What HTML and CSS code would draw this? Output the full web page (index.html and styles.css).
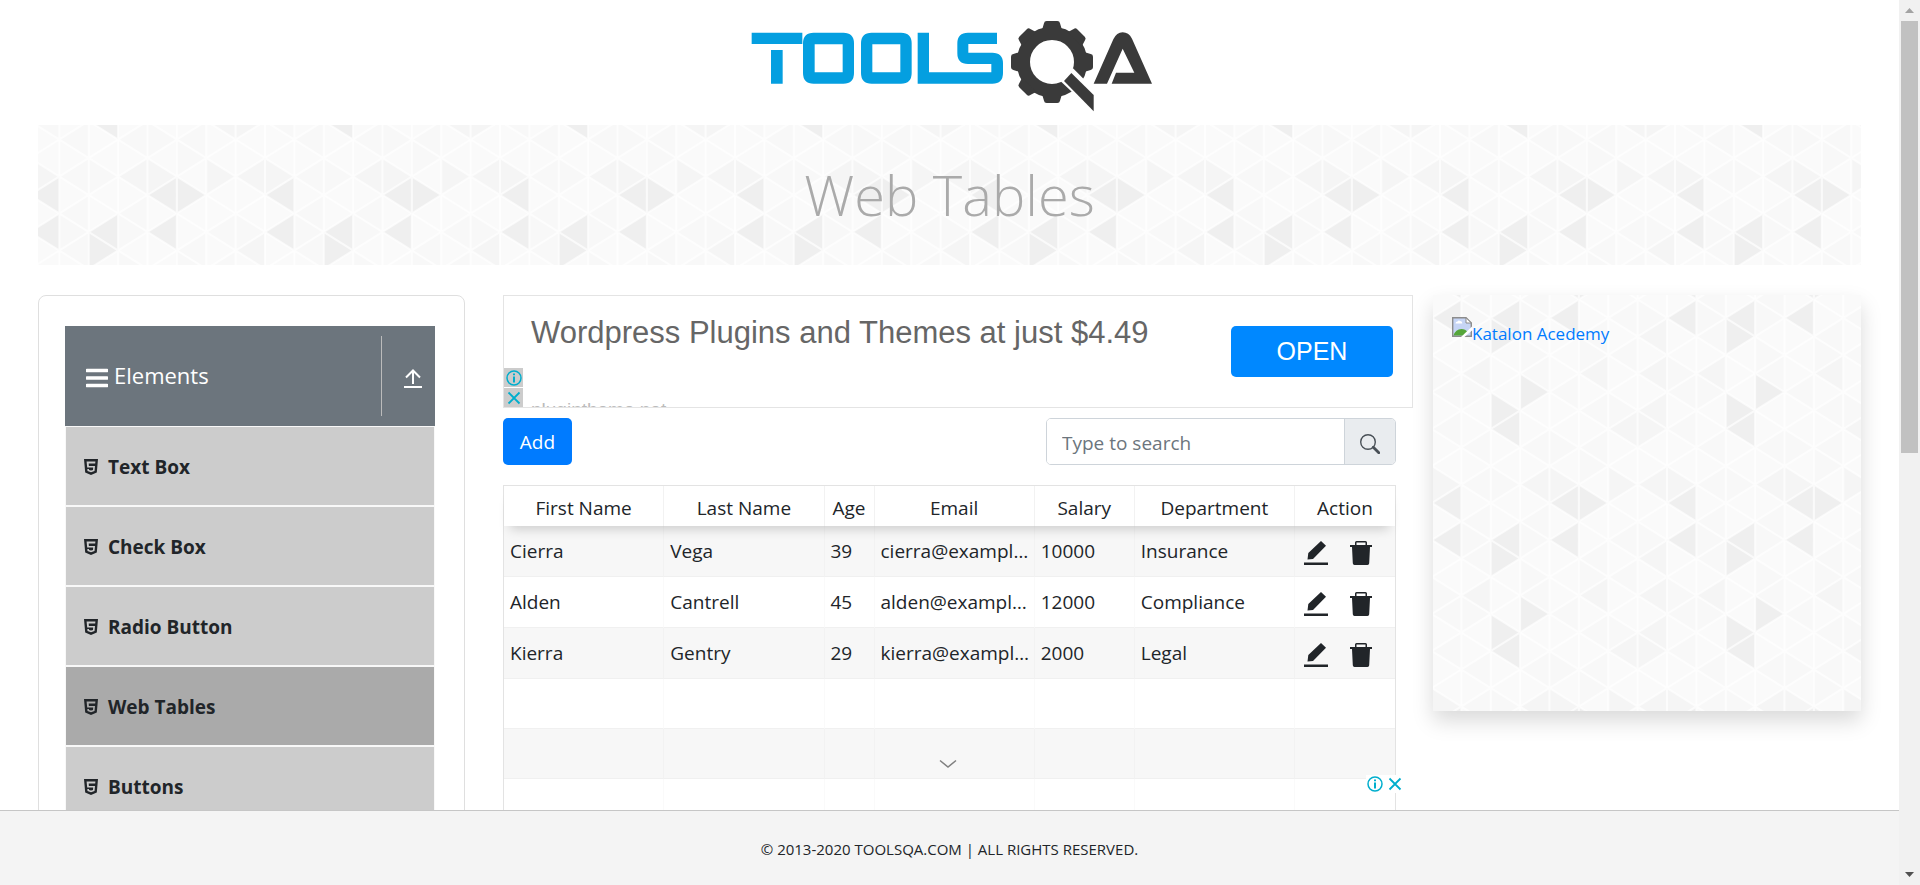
FILE: index.html
```
<!DOCTYPE html>
<html lang="en">
<head>
<meta charset="utf-8">
<title>ToolsQA - Web Tables</title>
<link rel="stylesheet" href="styles.css">
</head>
<body>
<svg class="sprite" aria-hidden="true">
  <symbol id="html5" viewBox="0 0 14 16"><path fill-rule="evenodd" d="M0 0h14l-1.200 13.500L7 16l-5.800-2.500zM2.600 2.600l.6 6h6l-.2 2.400-2 .6-2-.6v-.9H3.300l.2 2L7 13.300l3.500-1.200.5-5.100H4.900L4.700 4.600h6.500l.2-2z"/></symbol>
  <symbol id="edit" viewBox="0 0 24 24"><path d="M17 0l5 4.800L9 18l-5.500.5.8-6.500zM0 21.500h24V24H0z"/></symbol>
  <symbol id="trash" viewBox="0 0 22 24"><path fill-rule="evenodd" d="M0 4h5V1.500Q5 0 6.500 0h9Q17 0 17 1.500V4h5v2h-2l-.8 16.300q-.1 1.700-1.700 1.700h-13q-1.600 0-1.700-1.700L2 6H0zM6.500 1.500V4h9V1.500z"/></symbol>
  <symbol id="info" viewBox="0 0 16 16"><circle cx="8" cy="8" r="7" fill="none" stroke="currentColor" stroke-width="1.500"/><path d="M7 3.500h2v1.800H7zM7 6.500h2v6H7z" fill="currentColor"/></symbol>
  <symbol id="close" viewBox="0 0 16 16"><path d="M2.500 2.500l11 11M13.500 2.500l-11 11" fill="none" stroke="currentColor" stroke-width="1.800"/></symbol>
</svg>
<div class="window">
  <div class="page">
    <div class="content">
      <header class="site-header">
        <a href="#" aria-label="ToolsQA">
          <svg class="logo" viewBox="0 0 1320 375">
            <g fill="#049fe0">
              <path d="M65 98H217V132H65zM123 150H158V251H123z"/>
              <path fill-rule="evenodd" d="M251 98H340Q372 98 372 130V219Q372 251 340 251H251Q219 251 219 219V130Q219 98 251 98zM254 133V217H338V133z"/>
              <path fill-rule="evenodd" d="M425 98H513Q545 98 545 130V219Q545 251 513 251H425Q393 251 393 219V130Q393 98 425 98zM427 133V217H511V133z"/>
              <path d="M563 98H597V217H784V192H714Q682 192 682 160V130Q682 98 714 98H801V132H715V158H787Q819 158 819 190V219Q819 251 787 251H563z"/>
            </g>
            <g fill="#3a3a3a">
              <g transform="translate(966 186)">
                <circle r="86" fill="none" stroke="#3a3a3a" stroke-width="40"/>
                <path id="tooth" d="M-30-96L-24-116Q-23-123-16-123H16Q23-123 24-116L30-96z"/>
                <use href="#tooth" transform="rotate(45)"/><use href="#tooth" transform="rotate(90)"/><use href="#tooth" transform="rotate(180)"/><use href="#tooth" transform="rotate(225)"/><use href="#tooth" transform="rotate(270)"/><use href="#tooth" transform="rotate(315)"/>
              </g>
              <path d="M1029 205L1100 276V346L988 240z" fill="#fff"/>
              <path d="M1024 219L1091 285V334L1002 243z"/>
              <path d="M1091 251L1150 118Q1160 97 1178 97Q1196 97 1206 116L1266 251H1145L1158 218H1213L1178 146L1131 251z"/>
            </g>
          </svg>
        </a>
      </header>
      <div class="banner triangles"><h1>Web Tables</h1></div>
      <div class="columns">
        <nav class="sidebar">
          <button class="group-header" type="button">
            <svg class="bars" viewBox="0 0 22 20"><path d="M1 2.500h20M1 10h20M1 17.500h20" stroke="#fff" stroke-width="3.600" stroke-linecap="round"/></svg>
            <span class="group-name">Elements</span>
            <span class="collapse"><svg viewBox="0 0 18 20"><path d="M9 15V2M2 8.500l7-7 7 7" fill="none" stroke="#fff" stroke-width="2"/><path d="M0 18h18" stroke="#fff" stroke-width="2"/></svg></span>
          </button>
          <ul class="menu">
            <li><a href="#"><svg><use href="#html5"/></svg>Text Box</a></li>
            <li><a href="#"><svg><use href="#html5"/></svg>Check Box</a></li>
            <li><a href="#"><svg><use href="#html5"/></svg>Radio Button</a></li>
            <li><a href="#" class="active"><svg><use href="#html5"/></svg>Web Tables</a></li>
            <li><a href="#"><svg><use href="#html5"/></svg>Buttons</a></li>
          </ul>
        </nav>
        <main class="main">
          <section class="ad">
            <div class="ad-text">
              <p class="ad-title">Wordpress Plugins and Themes at just $4.49</p>
              <p class="ad-site">plugintheme.net</p>
            </div>
            <a href="#" class="ad-open">OPEN</a>
            <div class="ad-marks">
              <button type="button" aria-label="Ad information"><svg><use href="#info"/></svg></button>
              <button type="button" aria-label="Close ad"><svg><use href="#close"/></svg></button>
            </div>
          </section>
          <div class="table-area">
            <div class="toolbar">
              <button class="add" type="button">Add</button>
              <div class="search">
                <input type="text" placeholder="Type to search" aria-label="Search">
                <span class="search-icon"><svg viewBox="0 0 20 20"><circle cx="8" cy="8" r="7.300" fill="none" stroke="#495057" stroke-width="1.400"/><path d="M13.300 13.300l5.500 5.500" stroke="#495057" stroke-width="2.800" stroke-linecap="round"/></svg></span>
              </div>
            </div>
            <table class="records">
              <colgroup><col class="wide"><col class="wide"><col class="age"><col class="wide"><col class="mid"><col class="wide"><col class="mid"></colgroup>
              <thead><tr><th>First Name</th><th>Last Name</th><th>Age</th><th>Email</th><th>Salary</th><th>Department</th><th>Action</th></tr></thead>
              <tbody>
                <tr><td>Cierra</td><td>Vega</td><td>39</td><td>cierra@example.com</td><td>10000</td><td>Insurance</td><td class="actions"><button type="button" aria-label="Edit"><svg><use href="#edit"/></svg></button><button type="button" aria-label="Delete"><svg><use href="#trash"/></svg></button></td></tr>
                <tr><td>Alden</td><td>Cantrell</td><td>45</td><td>alden@example.com</td><td>12000</td><td>Compliance</td><td class="actions"><button type="button" aria-label="Edit"><svg><use href="#edit"/></svg></button><button type="button" aria-label="Delete"><svg><use href="#trash"/></svg></button></td></tr>
                <tr><td>Kierra</td><td>Gentry</td><td>29</td><td>kierra@example.com</td><td>2000</td><td>Legal</td><td class="actions"><button type="button" aria-label="Edit"><svg><use href="#edit"/></svg></button><button type="button" aria-label="Delete"><svg><use href="#trash"/></svg></button></td></tr>
                <tr class="blank"><td></td><td></td><td></td><td></td><td></td><td></td><td></td></tr>
                <tr class="blank"><td></td><td></td><td></td><td></td><td></td><td></td><td></td></tr>
                <tr class="blank"><td></td><td></td><td></td><td></td><td></td><td></td><td></td></tr>
              </tbody>
            </table>
          </div>
        </main>
        <aside class="promo triangles">
          <a href="#"><svg viewBox="0 0 20 20"><path d="M.7.700H14L19.300 6v13.300H.7z" fill="#c6d5f5" stroke="#8c8c8c" stroke-width="1.400"/><path d="M14 .7V6h5.300z" fill="#fff" stroke="#8c8c8c"/><path d="M3.500 6.500q0-2 2-2 1-1.800 2.800-.5 2.200.2 2 2.500z" fill="#fff"/><path d="M1.500 18.600q2-6.600 8-6.600 4 0 6 3l-4 3.600z" fill="#55a63a"/><path d="M20 9.500L9 20h3.500L20 13.500z" fill="#fff"/></svg><span>Katalon Acedemy</span></a>
        </aside>
      </div>
    </div>
    <footer class="footer">
      <button class="fold" type="button" aria-label="Collapse ad"><svg viewBox="0 0 18 10"><path d="M1 1.500l8 6.500 8-6.500" fill="none" stroke="#808080" stroke-width="1.500"/></svg></button>
      <div class="anchor-marks">
        <button type="button" aria-label="Ad information"><svg><use href="#info"/></svg></button>
        <button type="button" aria-label="Close ad"><svg><use href="#close"/></svg></button>
      </div>
      © 2013-2020 TOOLSQA.COM | ALL RIGHTS RESERVED.
    </footer>
  </div>
  <div class="scrollbar" aria-hidden="true">
    <svg viewBox="0 0 21 21"><path d="M6 13h9l-4.500-5z" fill="#a3a3a3"/></svg>
    <div class="thumb"></div>
    <svg viewBox="0 0 21 21"><path d="M6 8h9l-4.500 5z" fill="#505050"/></svg>
  </div>
</div>
</body>
</html>
```
FILE: styles.css
```
* { box-sizing: border-box; }
body {
  margin: 0;
  font: 19px/30px "Open Sans", "Noto Sans", sans-serif;
  color: #212529;
  background: #fff;
}
button { font: inherit; color: inherit; border: 0; padding: 0; background: none; }
a { text-decoration: none; }
svg { display: block; }
.sprite { position: absolute; width: 0; height: 0; }

.window { display: flex; height: 100vh; overflow: hidden; }
.page { flex: 1; min-width: 0; display: flex; flex-direction: column; }
.content { flex: 1; min-height: 0; overflow: hidden; padding: 0 38px; }

.site-header { display: flex; justify-content: center; }
.logo { width: 440px; height: 125px; }

/* Repeating tile of 8 columns by 12 half rows */
.triangles {
  background-color: #fafafa;
  background-size: 235px 222px;
  background-image: url("data:image/svg+xml,%3Csvg xmlns='http://www.w3.org/2000/svg' width='235' height='222' viewBox='0 0 8 12' preserveAspectRatio='none'%3E%3Crect width='8' height='12' fill='%23fafafa'/%3E%3Cpath fill='%23f8f8f8' d='M1 1l1-1v2zM1 3l1-1v2zM1 9l1-1v2zM1 11l1-1v2zM3 1l1-1v2zM3 5l1-1v2zM3 9l1-1v2zM5 3l1-1v2zM5 7l1-1v2zM5 9l1-1v2zM4 6l1-1v2zM6 2l1-1v2zM6 4l1-1v2zM0 6l1-1v2zM0 8l1-1v2zM1 1v2l1-1zM1 5v2l1-1zM3 1v2l1-1zM3 3v2l1-1zM5 3v2l1-1zM5 9v2l1-1zM6 6v2l1-1zM7 1v2l1-1zM0 4v2l1-1zM4 8v2l1-1zM2 10v2l1-1z'/%3E%3Cpath fill='%23f5f5f5' d='M7 3l1-1v2zM1 5l1-1v2zM7 5l1-1v2zM7 7l1-1v2zM6 8l1-1v2zM7 7v2l1-1zM6 10v2l1-1zM0 10v2l1-1zM7 11l1-1v2zM5 5l1-1v2zM3 11l1-1v2zM4 10v2l1-1z'/%3E%3Cpath fill='%23efefef' d='M0 0h1v1zM0 12l1-1v1zM0 2l1-1v2zM2 2l1-1v2zM2 2v2l1-1zM4 0h1v1zM4 12l1-1v1zM5 0h1L5 1zM5 12v-1l1 1zM4 2l1-1v2zM3 5v2l1-1zM2 6v2l1-1zM2 8l1-1v2z'/%3E%3Cpath fill='none' stroke='%23fff' stroke-opacity='.7' stroke-width='2' vector-effect='non-scaling-stroke' d='M0 0v12M1 0v12M2 0v12M3 0v12M4 0v12M5 0v12M6 0v12M7 0v12M8 0v12M0 0l8 8M0 2l8 8M0 4l8 8M0 6l6 6M0 8l4 4M0 10l2 2M2 0l6 6M4 0l4 4M6 0l2 2M8 0L0 8M8 2L0 10M8 4L0 12M8 6l-6 6M8 8l-4 4M8 10l-2 2M6 0L0 6M4 0L0 4M2 0L0 2'/%3E%3C/svg%3E");
}
.banner {
  height: 140px;
  display: flex;
  align-items: center;
  justify-content: center;
  background-position: -8px 70px;
  margin-bottom: 30px;
}
h1 { margin: 0; padding-bottom: 2px; font-size: 56px; font-weight: 300; line-height: 70px; color: #aaa; }

.columns { display: grid; grid-template-columns: 427fr 928fr 428fr; gap: 20px; align-items: start; }

.sidebar { border: 1px solid #dfdfdf; border-radius: 8px; padding: 30px 29px 30px 26px; }
.group-header {
  display: flex;
  align-items: center;
  width: 100%;
  height: 100px;
  padding: 10px 13px 10px 21px;
  background: #6c757d;
  color: #fff;
  font-size: 22px;
}
.bars { width: 22px; height: 20px; margin: 4px 6px 0 0; }
.group-name { padding-bottom: 2px; }
.collapse { margin-left: auto; height: 80px; padding: 6px 0 0 22px; border-left: 1px solid #bbb; display: flex; align-items: center; }
.collapse svg { width: 18px; height: 20px; }
.menu { list-style: none; margin: 0; padding: 0; }
.menu a {
  display: flex;
  align-items: center;
  gap: 10px;
  height: 80px;
  padding: 2px 0 0 18px;
  border: 1px solid #f8f8f8;
  background: #ccc;
  color: #212529;
  font-weight: 700;
}
.menu a.active { background: #aaa; }
.menu svg { width: 14px; height: 16px; fill: #212529; }

.main { padding-left: 18px; min-width: 0; }
.ad {
  position: relative;
  display: flex;
  justify-content: space-between;
  height: 113px;
  border: 1px solid #e4e4e4;
  padding: 0 19px 0 27px;
  overflow: hidden;
  font-family: "Liberation Sans", Arial, sans-serif;
}
.ad p { margin: 0; }
.ad-title { padding-top: 17px; font-size: 31px; line-height: 40px; color: #666; }
.ad-site { padding-top: 42px; font-size: 19px; line-height: 30px; color: #bbb; }
.ad-open {
  width: 162px;
  height: 51px;
  margin-top: 30px;
  border-radius: 5px;
  background: #08f;
  color: #fff;
  font-size: 25px;
  line-height: 51px;
  text-align: center;
}
.ad-marks { position: absolute; left: 0; bottom: 0; display: grid; gap: 1px; color: #00aecd; }
.ad-marks button { display: grid; place-items: center; width: 19px; height: 19px; background: #ccc; }
.ad-marks svg { width: 16px; height: 16px; }

.table-area { padding: 10px 17px 0 0; }
.toolbar { display: flex; justify-content: space-between; margin-bottom: 20px; }
.add { height: 47px; width: 69px; border-radius: 5px; background: #007bff; color: #fff; }
.search { display: flex; width: 350px; height: 47px; border: 1px solid #ced4da; border-radius: 5px; overflow: hidden; }
.search input { flex: 1; min-width: 0; border: 0; padding: 2px 15px 0; font: inherit; color: #495057; outline: 0; }
.search input::placeholder { color: #6c757d; opacity: 1; }
.search-icon { display: grid; place-items: center; width: 51px; padding-top: 4px; border-left: 1px solid #ced4da; background: #e9ecef; }
.search-icon svg { width: 20px; height: 20px; }

.records { width: 100%; table-layout: fixed; border-collapse: separate; border-spacing: 0; border: 1px solid #e3e3e3; }
.wide { width: 18%; }
.age { width: 50px; }
.mid { width: 100px; }
.records thead { position: relative; z-index: 1; box-shadow: 0 9px 12px -6px rgba(0, 0, 0, .18); }
.records th { height: 40px; padding: 4px 0 0; font-weight: 400; background: #fff; border-right: 1px solid #f2f2f2; }
.records td {
  height: 51px;
  padding: 0 4px 0 6px;
  border-right: 1px solid rgba(0, 0, 0, .02);
  border-bottom: 1px solid #f0f0f0;
  white-space: nowrap;
  overflow: hidden;
  text-overflow: ellipsis;
}
.records .blank td { height: 50px; }
.records tr > :last-child { border-right: 0; }
.records tbody tr:nth-child(odd) { background: #f7f7f7; }
.records .actions { padding: 0 0 0 9px; }
.actions button { vertical-align: middle; margin-right: 21px; }
.actions button + button { margin-right: 0; }
.actions svg { width: 24px; height: 24px; fill: #212529; }

.promo { height: 416px; padding: 22px 19px; background-position: -1px -14px; box-shadow: 0 10px 20px rgba(0, 0, 0, .15); }
.promo a { display: flex; color: #007bff; font-size: 17px; }
.promo a svg { width: 20px; height: 20px; }
.promo span { padding-top: 2px; }

.footer {
  position: relative;
  height: 75px;
  padding-top: 23px;
  border-top: 1px solid #c6c6c6;
  background: #f4f4f4;
  text-align: center;
  font-size: 15px;
}
.fold { position: absolute; left: 50%; bottom: 116px; margin-left: -11px; }
.fold svg { width: 18px; height: 10px; }
.anchor-marks { position: absolute; right: 495px; bottom: 92px; display: flex; gap: 4px; padding: 1px; color: #00aecd; background: #fff; }
.anchor-marks svg { width: 16px; height: 16px; }

.scrollbar { width: 21px; display: flex; flex-direction: column; background: #f1f1f1; }
.scrollbar svg { width: 21px; height: 21px; flex: none; }
.thumb { width: 17px; height: 432px; margin: 0 2px auto; background: #c1c1c1; }
```
